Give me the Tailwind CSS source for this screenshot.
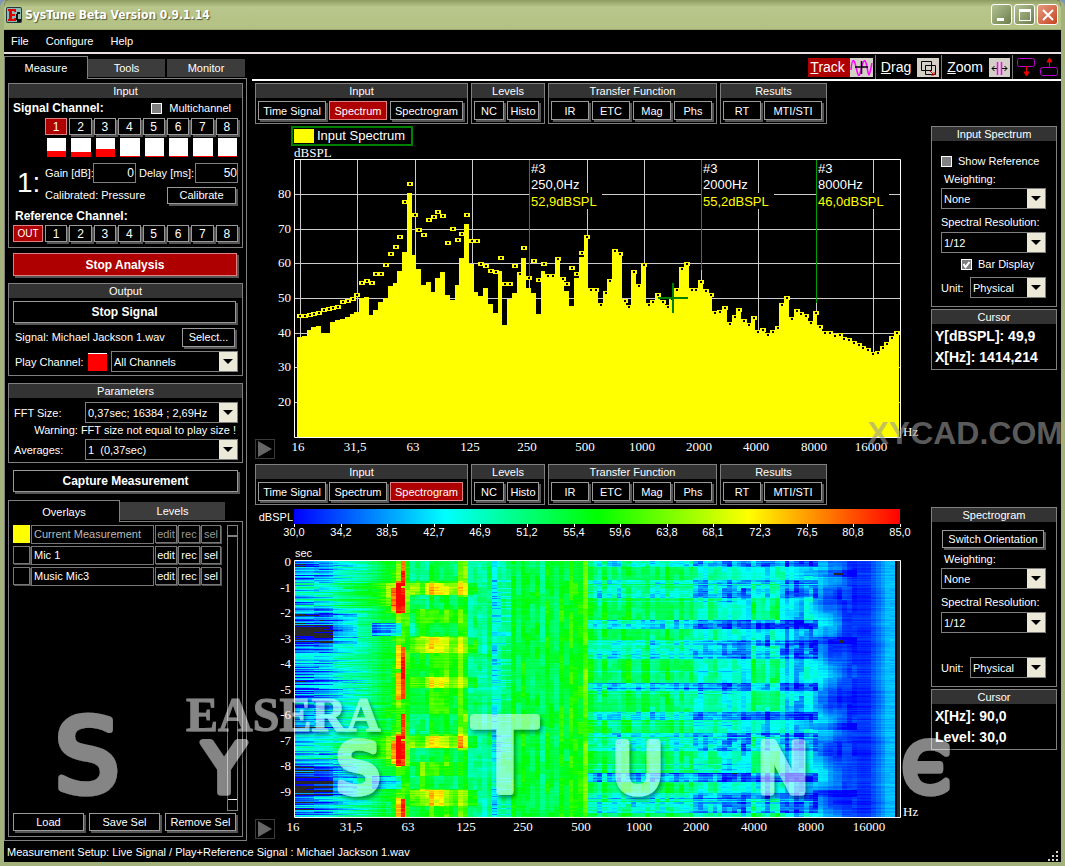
<!DOCTYPE html>
<html lang="en">
<head>
<meta charset="utf-8">
<meta name="viewport" content="width=device-width, initial-scale=1">
<title>SysTune Beta Version 0.9.1.14</title>
<script src="https://cdn.jsdelivr.net/npm/@tailwindcss/browser@4"></script>
</head>
<body class="bg-[#7d96b8] font-['Liberation_Sans',Arial,sans-serif] text-[11px] leading-[14px] text-white">
<div class="relative flex min-h-screen flex-col overflow-hidden rounded-t-lg border-x-4 border-b-4 border-[#a3b27a] bg-black">

  <header class="-mx-1 flex h-[30px] items-center border-b border-[#98a76a] bg-linear-to-b from-[#8d9c62] via-[#b9c68c] via-25% to-[#b4c184] pr-[7px] pl-[6px]">
    <svg class="mr-[3px] h-4 w-4" viewBox="0 0 16 16" aria-hidden="true"><rect width="16" height="16" rx="2" fill="#1c3a40"/><rect x="1" y="1" width="14" height="14" rx="1" fill="#8fb9b5"/><path d="M2 2h8v3H8V4H6v3h3v2H6v3h2v-1h2v3H2v-2h1V4H2z" fill="#e00000"/><path d="M11 5h3v2h-3zM10 7h2v5h3v3h-4v-2h-1z" fill="#111"/></svg>
    <h1 class="flex-1 font-['DejaVu_Sans_Condensed','DejaVu_Sans',sans-serif] text-[12px] font-bold [text-shadow:1px_1px_1px_#4a5530]">SysTune Beta Version 0.9.1.14</h1>
    <div class="flex gap-[2px]">
      <button aria-label="Minimize" class="grid h-[21px] w-[21px] place-items-center rounded-[3px] border border-white bg-linear-to-br from-[#b4c294] to-[#6d7f4c]"><svg class="h-3 w-3" viewBox="0 0 12 12"><path d="M1 9h7v3H1z" fill="#fff"/></svg></button>
      <button aria-label="Maximize" class="grid h-[21px] w-[21px] place-items-center rounded-[3px] border border-white bg-linear-to-br from-[#b4c294] to-[#6d7f4c]"><svg class="h-3 w-3" viewBox="0 0 12 12"><path d="M0 0h12v12H0zM1 3v8h10V3z" fill="#fff" fill-rule="evenodd"/></svg></button>
      <button aria-label="Close" class="grid h-[21px] w-[21px] place-items-center rounded-[3px] border border-white bg-linear-to-br from-[#e59a80] to-[#c4401a]"><svg class="h-3 w-3" viewBox="0 0 12 12"><path d="M1 1l10 10M11 1L1 11" stroke="#fff" stroke-width="2"/></svg></button>
    </div>
  </header>

  <nav class="flex h-6 items-center gap-[17px] border-b-2 border-[#e8e0e0] pl-[7px]">
    <button>File</button><button>Configure</button><button>Help</button>
  </nav>

  <div class="flex flex-1">
    <!-- Measurement controls -->
    <aside class="mt-[2px] mb-[2px] flex w-[243px] shrink-0 flex-col">
      <div class="flex items-end">
        <button class="relative z-10 -mb-px h-[23px] w-[84px] border border-b-0 border-[#808080] bg-black">Measure</button>
        <button class="mr-[2px] mb-px h-[18px] w-[77px] bg-[#3c3c3c]">Tools</button>
        <button class="mb-px h-[18px] w-[78px] bg-[#3c3c3c]">Monitor</button>
      </div>
      <div class="flex flex-1 flex-col border border-[#808080] px-[3px] pt-[4px] pb-[3px]">

        <section class="border border-[#808080]">
          <h2 class="h-[14px] bg-[#333] text-center">Input</h2>
          <div class="px-[4px]">
            <div class="flex h-5 items-center">
              <span class="flex-1 text-[12px] font-bold">Signal Channel:</span>
              <label class="flex items-center gap-[7px] pr-[7px]"><input type="checkbox" class="h-[11px] w-[11px] appearance-none border border-white bg-[#808080]">Multichannel</label>
            </div>
            <div class="ml-8 grid grid-cols-8 gap-[2px]" id="sig"></div>
            <div class="mt-[3px] ml-8 grid grid-cols-8 gap-[2px]" id="meters"></div>
            <div class="mt-[5px] flex">
              <div class="flex w-8 items-center pl-1 text-[28px] leading-7">1:</div>
              <div class="flex-1">
                <div class="flex h-[21px] items-center">
                  <label for="gain" class="w-12 whitespace-nowrap">Gain [dB]:</label>
                  <input id="gain" value="0" class="h-5 w-[43px] border border-[#808080] bg-black pr-px text-right text-[12px]">
                  <label for="delay" class="ml-[3px] w-[56px] whitespace-nowrap">Delay [ms]:</label>
                  <input id="delay" value="50" class="h-5 w-0 flex-1 border border-[#808080] bg-black text-right text-[12px]">
                </div>
                <div class="mt-[3px] flex h-[18px] items-center justify-between">
                  <span>Calibrated: Pressure</span>
                  <button class="mr-[2px] h-[17px] w-[69px] border border-[#999] shadow-[2px_2px_0_#555]">Calibrate</button>
                </div>
              </div>
            </div>
            <div class="mt-[3px] flex h-[17px] items-center pl-[2px] text-[12px] font-bold">Reference Channel:</div>
            <div class="mt-[1px] flex pb-[5px]">
              <button class="mr-[2px] h-[17px] w-[30px] border border-[#e08080] bg-[#ae0000] text-[10px]">OUT</button>
              <div class="grid flex-1 grid-cols-8 gap-[2px]" id="ref"></div>
            </div>
          </div>
        </section>

        <button class="mr-[6px] ml-[5px] mt-[5px] h-[23px] shrink-0 border border-[#e08080] bg-[#ae0000] text-[12px] font-bold shadow-[2px_2px_0_#555]">Stop Analysis</button>

        <section class="mt-[7px] border border-[#808080]">
          <h2 class="h-[14px] bg-[#333] text-center">Output</h2>
          <div class="px-[4px] pb-[3px]">
            <button class="mt-[3px] h-[22px] w-[223px] border border-[#999] text-[12px] font-bold shadow-[2px_2px_0_#555]">Stop Signal</button>
            <div class="mt-[4px] flex h-5 items-center justify-between pr-[3px] pl-[2px]"><span>Signal: Michael Jackson 1.wav</span><button class="h-[19px] w-[53px] border border-[#999] shadow-[2px_2px_0_#555]">Select...</button></div>
            <div class="mt-[4px] flex h-[21px] items-center pl-[2px]">
              <label for="play" class="w-[73px]">Play Channel:</label>
              <span class="mr-[4px] h-[18px] w-[19px] border-t border-white bg-[#f00]"></span>
              <div class="relative h-[21px] flex-1"><select id="play" class="h-full w-full appearance-none border border-[#808080] bg-black pl-[2px]"><option>All Channels</option></select><svg class="pointer-events-none absolute top-px right-px h-[19px] w-[18px] bg-[#ece9d8]" viewBox="0 0 18 19"><path d="M4 7h10l-5 5z" fill="#000"/></svg></div>
            </div>
          </div>
        </section>

        <section class="mt-[7px] border border-[#808080]">
          <h2 class="h-[14px] bg-[#333] text-center">Parameters</h2>
          <div class="px-[4px] pt-[4px] pb-[2px]">
            <div class="flex items-center pl-px"><label for="fft" class="w-[71px]">FFT Size:</label>
              <div class="relative h-[21px] flex-1"><select id="fft" class="h-full w-full appearance-none border border-[#808080] bg-black pl-[2px]"><option>0,37sec; 16384 ; 2,69Hz</option></select><svg class="pointer-events-none absolute top-px right-px h-[19px] w-[18px] bg-[#ece9d8]" viewBox="0 0 18 19"><path d="M4 7h10l-5 5z" fill="#000"/></svg></div></div>
            <p class="h-4 pr-[2px] text-right whitespace-nowrap">Warning: FFT size not equal to play size !</p>
            <div class="flex items-center pl-px"><label for="avg" class="w-[71px]">Averages:</label>
              <div class="relative h-[21px] flex-1"><select id="avg" class="h-full w-full appearance-none border border-[#808080] bg-black pl-[2px]"><option>1&nbsp; (0,37sec)</option></select><svg class="pointer-events-none absolute top-px right-px h-[19px] w-[18px] bg-[#ece9d8]" viewBox="0 0 18 19"><path d="M4 7h10l-5 5z" fill="#000"/></svg></div></div>
          </div>
        </section>

        <button class="mr-[5px] ml-[5px] mt-[7px] h-[22px] shrink-0 border border-[#999] text-[12px] font-bold shadow-[2px_2px_0_#555]">Capture Measurement</button>

        <div class="mt-[8px] flex items-end">
          <button class="relative z-10 -mb-px h-[22px] w-28 border border-b-0 border-[#808080] bg-black">Overlays</button>
          <button class="mb-px h-[18px] w-[105px] bg-[#3c3c3c]">Levels</button>
        </div>
        <section class="flex flex-1 flex-col border border-[#808080] px-[4px] pt-[3px] pb-[5px]">
          <div class="flex flex-1 justify-between">
            <ul class="flex flex-col gap-[2px]" id="overlays"></ul>
            <div class="flex w-[11px] flex-col justify-between border border-[#808080]" role="scrollbar" aria-label="Overlays" aria-controls="overlays" aria-valuenow="0"><span class="h-[11px] border-b-2 border-[#808080]"></span><span class="h-[11px] border-t border-white"></span></div>
          </div>
          <div class="mt-[2px] grid grid-cols-3 gap-[5px] pr-[2px]">
            <button class="h-[18px] border border-[#999] whitespace-nowrap shadow-[2px_2px_0_#555]">Load</button>
            <button class="h-[18px] border border-[#999] whitespace-nowrap shadow-[2px_2px_0_#555]">Save Sel</button>
            <button class="h-[18px] border border-[#999] whitespace-nowrap shadow-[2px_2px_0_#555]">Remove Sel</button>
          </div>
        </section>
      </div>
    </aside>

    <!-- Graph area -->
    <main class="ml-[5px] min-w-0 flex-1">
      <div class="flex h-[27px] items-center justify-end border-b-2 border-white pt-px pr-[2px] text-[14px]">
        <button class="flex h-[19px] items-center bg-[#ae0000] pl-[2px]"><span class="mr-[5px]"><u>T</u>rack</span><svg class="h-[19px] w-[23px] bg-[#d4d0c8]" viewBox="0 0 23 19"><path d="M1 12C2 0 4 0 6 9s3 12 5 3 4-14 6-3 2 11 5-4" fill="none" stroke="#f0f" stroke-width="1.5"/><path d="M5 9h13M11.500 3v13" stroke="#000" stroke-width="1.500"/></svg></button>
        <span class="ml-[2px] h-6 w-px bg-[#777]"></span>
        <button class="ml-[5px] flex h-[19px] items-center"><span class="mr-[6px]"><u>D</u>rag</span><svg class="h-[19px] w-[22px] bg-[#d4d0c8]" viewBox="0 0 22 19"><path d="M4.500 3.500h10v9h-10zM8.500 7.500h10v9h-10zM8.500 7.500h6v5h-6" fill="none" stroke="#000"/><path d="M13 13l4 4m0-3v3h-3" stroke="#d00" fill="none"/></svg></button>
        <span class="ml-[2px] h-6 w-px bg-[#777]"></span>
        <button class="ml-[5px] flex h-[19px] items-center"><span class="mr-[6px]"><u>Z</u>oom</span><svg class="h-[19px] w-[21px] bg-[#d4d0c8]" viewBox="0 0 21 19"><path d="M8.500 4v13M12.500 4v13" stroke="#f0f" stroke-width="1.500"/><path d="M3 10.500h5M13 10.500h5M5.500 8L3 10.500 5.500 13M15.500 8l2.500 2.500-2.500 2.500" stroke="#000" fill="none"/></svg></button>
        <span class="ml-[2px] h-6 w-px bg-[#777]"></span>
        <button aria-label="Move graph down" class="ml-[3px]"><svg class="h-5 w-5" viewBox="0 0 20 20"><rect x="1.500" y="1.500" width="17" height="8" rx="2" fill="none" stroke="#c000d0"/><path d="M10.500 9v10M8 15l2.500 4 2.500-4z" stroke="#e00" fill="#e00"/></svg></button>
        <button aria-label="Move graph up" class="ml-[3px]"><svg class="h-5 w-5" viewBox="0 0 20 20"><rect x="1.500" y="10.500" width="17" height="8" rx="2" fill="none" stroke="#c000d0"/><path d="M10.500 11V1M8 5l2.500-4L13 5z" stroke="#e00" fill="#e00"/></svg></button>
      </div>

      <section class="grid grid-cols-[1fr_126px] pr-[4px]">
        <div class="relative min-w-0 pt-[2px]">
          <div class="flex gap-[3px] pl-[3px]" data-groups="Spectrum"></div>
          <div class="mt-[2px] ml-[39px] flex h-5 w-[122px] items-center border-2 border-[#008000]"><span class="mr-[3px] ml-px h-[14px] w-5 bg-[#ff0]"></span><span class="text-[13px] whitespace-nowrap">Input Spectrum</span></div>
          <svg class="block w-full" viewBox="252 146 679 315" id="spectrum" role="img" aria-label="Input spectrum"></svg>
          <button aria-label="Play spectrum" class="absolute bottom-[2px] left-[3px] grid h-5 w-5 place-items-center border border-[#3a3a3a]"><svg class="h-4 w-4" viewBox="0 0 16 16"><path d="M1 0l14 8L1 16z" fill="#666"/></svg></button>
        </div>
        <div class="pt-[45px]">
          <div class="h-[181px] border border-[#808080]">
            <h2 class="h-[14px] bg-[#333] text-center">Input Spectrum</h2>
            <div class="px-[9px]">
              <label class="mt-[13px] flex items-center gap-[6px]"><input type="checkbox" class="h-[11px] w-[11px] appearance-none border border-white bg-[#808080]">Show Reference</label>
              <label for="w1" class="mt-[4px] block pl-[3px]">Weighting:</label>
              <div class="relative mt-[2px] h-[21px] w-[105px]"><select id="w1" class="h-full w-full appearance-none border border-[#808080] bg-black pl-[2px]"><option>None</option></select><svg class="pointer-events-none absolute top-px right-px h-[19px] w-[18px] bg-[#ece9d8]" viewBox="0 0 18 19"><path d="M4 7h10l-5 5z" fill="#000"/></svg></div>
              <label for="r1" class="mt-[6px] block whitespace-nowrap">Spectral Resolution:</label>
              <div class="relative mt-[3px] h-[21px] w-[105px]"><select id="r1" class="h-full w-full appearance-none border border-[#808080] bg-black pl-[2px]"><option>1/12</option></select><svg class="pointer-events-none absolute top-px right-px h-[19px] w-[18px] bg-[#ece9d8]" viewBox="0 0 18 19"><path d="M4 7h10l-5 5z" fill="#000"/></svg></div>
              <label class="relative mt-[4px] ml-5 flex items-center gap-[6px]"><input type="checkbox" checked class="h-[11px] w-[11px] appearance-none border border-white bg-[#808080]"><svg class="pointer-events-none absolute left-0 h-[11px] w-[11px]" viewBox="0 0 11 11"><path d="M2.500 5l2 3 4-5" stroke="#fff" stroke-width="2" fill="none"/></svg>Bar Display</label>
              <div class="mt-[6px] flex items-center"><label for="u1" class="w-[29px]">Unit:</label><div class="relative h-[21px] w-[76px]"><select id="u1" class="h-full w-full appearance-none border border-[#808080] bg-black pl-[2px]"><option>Physical</option></select><svg class="pointer-events-none absolute top-px right-px h-[19px] w-[18px] bg-[#ece9d8]" viewBox="0 0 18 19"><path d="M4 7h10l-5 5z" fill="#000"/></svg></div></div>
            </div>
          </div>
          <div class="mt-[2px] h-[61px] border border-[#808080]">
            <h2 class="h-[14px] bg-[#333] text-center">Cursor</h2>
            <div class="pt-[2px] pl-[3px] text-[14px] leading-[21px] font-bold whitespace-nowrap"><p>Y[dBSPL]: 49,9</p><p>X[Hz]: 1414,214</p></div>
          </div>
        </div>
      </section>

      <section class="grid grid-cols-[1fr_126px] pr-[4px]">
        <div class="relative min-w-0 pt-[3px]">
          <div class="flex gap-[3px] pl-[3px]" data-groups="Spectrogram"></div>
          <svg class="block w-full" viewBox="252 505 679 337" id="spectrogram" role="img" aria-label="Spectrogram"></svg>
          <button aria-label="Play spectrogram" class="absolute bottom-[3px] left-[3px] grid h-5 w-5 place-items-center border border-[#3a3a3a]"><svg class="h-4 w-4" viewBox="0 0 16 16"><path d="M1 0l14 8L1 16z" fill="#666"/></svg></button>
        </div>
        <div class="pt-[46px]">
          <div class="h-[180px] border border-[#808080]">
            <h2 class="h-[14px] bg-[#333] text-center">Spectrogram</h2>
            <div class="px-[9px]">
              <button class="mt-[8px] ml-px h-[18px] w-[102px] border border-[#999] whitespace-nowrap shadow-[2px_2px_0_#555]">Switch Orientation</button>
              <label for="w2" class="mt-[4px] block pl-[3px]">Weighting:</label>
              <div class="relative mt-[2px] h-[21px] w-[105px]"><select id="w2" class="h-full w-full appearance-none border border-[#808080] bg-black pl-[2px]"><option>None</option></select><svg class="pointer-events-none absolute top-px right-px h-[19px] w-[18px] bg-[#ece9d8]" viewBox="0 0 18 19"><path d="M4 7h10l-5 5z" fill="#000"/></svg></div>
              <label for="r2" class="mt-[6px] block whitespace-nowrap">Spectral Resolution:</label>
              <div class="relative mt-[3px] h-[21px] w-[105px]"><select id="r2" class="h-full w-full appearance-none border border-[#808080] bg-black pl-[2px]"><option>1/12</option></select><svg class="pointer-events-none absolute top-px right-px h-[19px] w-[18px] bg-[#ece9d8]" viewBox="0 0 18 19"><path d="M4 7h10l-5 5z" fill="#000"/></svg></div>
              <div class="mt-6 flex items-center"><label for="u2" class="w-[29px]">Unit:</label><div class="relative h-[21px] w-[76px]"><select id="u2" class="h-full w-full appearance-none border border-[#808080] bg-black pl-[2px]"><option>Physical</option></select><svg class="pointer-events-none absolute top-px right-px h-[19px] w-[18px] bg-[#ece9d8]" viewBox="0 0 18 19"><path d="M4 7h10l-5 5z" fill="#000"/></svg></div></div>
            </div>
          </div>
          <div class="mt-[2px] h-[61px] border border-[#808080]">
            <h2 class="h-[14px] bg-[#333] text-center">Cursor</h2>
            <div class="pt-[2px] pl-[3px] text-[14px] leading-[21px] font-bold whitespace-nowrap"><p>X[Hz]: 90,0</p><p>Level: 30,0</p></div>
          </div>
        </div>
      </section>
    </main>
  </div>

  <footer class="-mt-px flex h-5 items-center justify-between pl-[3px]"><span>Measurement Setup: Live Signal / Play+Reference Signal : Michael Jackson 1.wav</span>
    <svg class="mr-[2px] h-3 w-3 self-end" viewBox="0 0 12 12" aria-hidden="true"><path d="M9 1h2v2H9zM5 5h2v2H5zM9 5h2v2H9zM1 9h2v2H1zM5 9h2v2H5zM9 9h2v2H9z" fill="#d8d4c8"/></svg>
  </footer>

  <!-- Product name laid over the window -->
  <svg class="pointer-events-none absolute bottom-0 left-0 h-[182px] w-[1057px]" viewBox="4 680 1057 182">
    <defs><filter id="sh" x="-10%" y="-10%" width="120%" height="130%"><feDropShadow dx="2" dy="3" stdDeviation="2" flood-color="#000" flood-opacity=".8"/></filter></defs>
    <g opacity=".52" fill="#fff" filter="url(#sh)">
      <text x="186" y="731" class="font-['Liberation_Serif',serif] text-[48px] font-bold" stroke="#fff" stroke-width="1">EASERA</text>
      <g class="font-['DejaVu_Sans',sans-serif]" stroke="#fff" stroke-width="7" stroke-linejoin="round" text-anchor="middle">
        <g class="text-[102px]"><text x="87" y="792">S</text><text x="505" y="792">T</text></g>
        <g class="text-[68px]"><text x="224" y="792">Y</text><text x="358" y="792">S</text><text x="638" y="792">U</text><text x="783" y="792">N</text><text x="926" y="792">Є</text></g>
      </g>
    </g>
  </svg>
  <div class="pointer-events-none absolute top-[414px] right-[-2px] font-['Liberation_Sans',sans-serif] text-[32px] leading-[38px] font-bold text-[#999]/60">XYCAD.COM</div>
</div>

<script>
const byId = id => document.getElementById(id);

// Channel buttons and meters
const chan = (n, on) => `<button class="h-[17px] border text-[12px] ${on ? 'border-[#e08080] bg-[#ae0000]' : 'border-[#999] shadow-[2px_2px_0_#555]'}">${n}</button>`;
const nums = [1,2,3,4,5,6,7,8];
byId('sig').innerHTML = nums.map(n => chan(n, n === 1)).join('');
byId('ref').innerHTML = nums.map(n => chan(n, false)).join('');
byId('meters').innerHTML = [6,5,8,1,1,1,1,1].map(h => `<div class="mr-px ml-[2px] flex h-[19px] items-end bg-white"><span class="w-full bg-[#f00]" style="height:${h}px"></span></div>`).join('');

// Overlay list
byId('overlays').innerHTML = ['Current Measurement', 'Mic 1', 'Music Mic3'].map((n, i) => {
  const tone = i ? 'text-white' : 'text-[#999]';
  const b = (t, w) => `<button class="h-[18px] ${w} border border-[#777] ${tone} shadow-[1px_1px_0_#555]">${t}</button>`;
  return `<li class="flex h-[19px] gap-px"><button aria-label="Colour of ${n}" class="h-[18px] w-[17px] border ${i ? 'border-[#777] shadow-[1px_1px_0_#555]' : 'border-[#ff0] bg-[#ff0]'}"></button><span class="h-[19px] w-[123px] border border-[#777] pl-[2px] leading-[17px] ${i ? 'text-white' : 'text-[#bbb]'}">${n}</span>${b('edit','w-[22px]')}${b('rec','w-[22px]')}${b('sel','w-[20px]')}</li>`;
}).join('');

// Graph selection groups
const groups = [
  ['Input', 'w-[213px]', [['Time Signal','w-[68px]'],['Spectrum','w-[58px]'],['Spectrogram','w-[73px]']]],
  ['Levels', 'w-[74px]', [['NC','w-[30px]'],['Histo','w-[32px]']]],
  ['Transfer Function', 'w-[169px]', [['IR','w-[38px]'],['ETC','w-[38px]'],['Mag','w-[38px]'],['Phs','w-[38px]']]],
  ['Results', 'w-[107px]', [['RT','w-[38px]'],['MTI/STI','w-[58px]']]]
];
document.querySelectorAll('[data-groups]').forEach(el => {
  el.innerHTML = groups.map(([t, w, bs]) => `<div class="h-[41px] ${w} border border-[#808080]"><h2 class="h-[14px] bg-[#333] text-center">${t}</h2><div class="flex gap-[3px] pt-[3px] pl-[2px]">${bs.map(([n, bw]) => `<button class="h-[19px] ${bw} border whitespace-nowrap ${n === el.dataset.groups ? 'border-[#e08080] bg-[#ae0000]' : 'border-[#999] shadow-[2px_2px_0_#555]'}">${n}</button>`).join('')}</div></div>`).join('');
});

const freqs = ['16','31,5','63','125','250','500','1000','2000','4000','8000','16000'];
const serif = "font-['Liberation_Serif',serif] text-[13px]";

// Input spectrum: bar tops and peak markers in chart units
const tops = [337,336,330,327,326,333,333,322,320,319,317,314,312,298,297,315,310,302,298,286,283,271,252,193,255,269,285,282,292,278,272,295,300,285,258,224,264,292,296,288,304,313,271,325,299,293,273,258,288,293,314,271,276,276,258,279,291,306,278,257,235,288,288,303,291,279,249,252,299,305,270,284,263,303,300,293,300,305,297,288,267,262,288,288,280,289,293,311,310,306,322,315,308,319,323,316,330,328,333,330,326,303,296,317,309,312,314,321,311,325,331,331,334,333,337,338,341,343,346,348,352,351,346,342,336,331];
const peaks = [316,316,315,314,313,310,309,308,307,302,301,299,295,283,281,283,274,274,265,254,247,237,202,184,215,230,235,220,217,212,216,243,229,240,234,215,241,241,264,266,271,272,258,284,284,266,274,248,278,261,280,264,276,276,259,279,284,268,274,253,237];
const gx = k => Math.round(300 + 57.3 * k), cx = k => Math.round(300 + 4.775 * k);
let s = '';
for (let k = 0; k < 11; k++) s += `<path d="M${gx(k)}.5 160V437" stroke="#ccc"/>`;
[194,229,263,298,333,367,402].forEach((y, i) => { s += `<path d="M295 ${y}.5H900" stroke="#ccc"/><text x="291" y="${y + 4}" text-anchor="end" fill="#fff" class="${serif}">${80 - 10 * i}</text>`; });
tops.forEach((y, k) => { const x = k ? cx(k) - 3 : 297, e = Math.min(900, cx(k + 1) - 3); s += `<rect x="${x}" y="${y}" width="${e - x}" height="${437 - y}" fill="#ff0"/>`; });
tops.forEach((t, k) => { const y = k < peaks.length ? peaks[k] : t + 2, x = cx(k) - 3; s += `<rect x="${x}" y="${y - 2}" width="6" height="4" fill="#ff0"/><rect x="${x + 2}" y="${y - 1}" width="2" height="2" fill="#000"/>`; });
[[529,277,'250,0Hz','52,9dBSPL'],[701,270,'2000Hz','55,2dBSPL'],[816,303,'8000Hz','46,0dBSPL']].forEach(([x, y, f, l]) => {
  s += `<rect x="${x + 1}" y="161" width="50" height="32" fill="#000"/><rect x="${x + 1}" y="193" width="72" height="16" fill="#000"/><path d="M${x}.5 160V${y}" stroke="#00a000"/><g class="text-[13px]" fill="#fff"><text x="${x + 2}" y="173">#3</text><text x="${x + 2}" y="189">${f}</text><text x="${x + 2}" y="206" fill="#ff0">${l}</text></g>`;
});
s += '<path d="M658 298H688M673 283V313" stroke="#008000" stroke-width="2"/><path d="M294.500 437.500V159.500H900.500V437.500z" fill="none" stroke="#fff"/>';
freqs.forEach((f, k) => { s += `<text x="${gx(k) - 2}" y="451" text-anchor="middle" fill="#fff" class="${serif}">${f}</text>`; });
s += `<text x="294" y="157" fill="#fff" class="${serif}">dBSPL</text><text x="903" y="436" fill="#fff" class="${serif}">Hz</text>`;
byId('spectrum').innerHTML = s;

// Spectrogram frame, colour scale and axes
s = '<defs><linearGradient id="scale"><stop stop-color="#00f"/><stop offset=".25" stop-color="#0ff"/><stop offset=".5" stop-color="#0f0"/><stop offset=".75" stop-color="#ff0"/><stop offset="1" stop-color="#f00"/></linearGradient></defs><rect x="294" y="509" width="606" height="15" fill="url(#scale)"/><text x="293" y="521" text-anchor="end" fill="#fff" class="text-[11px]">dBSPL</text>';
['30,0','34,2','38,5','42,7','46,9','51,2','55,4','59,6','63,8','68,1','72,3','76,5','80,8','85,0'].forEach((t, i) => { const x = Math.round(294 + 46.6 * i); s += `<path d="M${x}.5 524v3" stroke="#fff"/><text x="${x}" y="536" text-anchor="middle" fill="#fff" class="text-[11px]">${t}</text>`; });
for (let i = 0; i < 10; i++) s += `<text x="291" y="${Math.round(566 + 25.5 * i)}" text-anchor="end" fill="#fff" class="${serif}">${i ? -i : 0}</text>`;
freqs.forEach((f, k) => { s += `<text x="${Math.round(293 + 57.6 * k)}" y="831" text-anchor="middle" fill="#fff" class="${serif}">${f}</text>`; });
s += `<text x="295" y="557" fill="#fff" class="text-[11px]">sec</text><text x="903" y="816" fill="#fff" class="${serif}">Hz</text><foreignObject x="295" y="561" width="605" height="256"><canvas width="605" height="256" id="heat" class="block"></canvas></foreignObject><path d="M294.500 560.500H900.500V817.500H294.500z" fill="none" stroke="#fff"/>`;
byId('spectrogram').innerHTML = s;

// Level map: a six second loop (153 rows) of a beat pattern
const rnd = (a, b) => { const v = Math.sin(a * 127.1 + b * 311.7) * 43758.5453; return v - Math.floor(v); };
const curve = [[0,38],[30,41],[45,46],[75,51],[92,57],[100,60],[112,62],[116,57],[145,58],[165,58],[170,52],[200,51],[225,54],[250,54],[278,57],[288,63],[296,54],[340,52],[380,53],[395,50],[430,47],[470,44],[490,43],[520,41],[528,38],[550,33],[570,32],[583,37],[590,40],[605,40]];
const base = x => { for (let i = 1; i < curve.length; i++) if (x <= curve[i][0]) { const [a, p] = curve[i - 1], [b, q] = curve[i]; return p + (q - p) * (x - a) / (b - a); } return 40; };
const dips = [[0,6,.7],[19,23,.9],[24,37,.6],[59,68,1.1],[79,88,.6],[88,98,.8],[122,130,1],[151,159,1],[172,176,.9],[177,190,.6],[212,221,1.1],[232,240,.6],[241,252,.8]];
const colour = v => {
  if (v < 27) return '#282828';
  const t = Math.max(0, Math.min(1, (v - 30) / 55)) * 4, i = Math.min(3, Math.floor(t)), f = Math.round((t - i) * 255);
  return [`rgb(0,${f},255)`, `rgb(0,255,${255 - f})`, `rgb(${f},255,0)`, `rgb(255,${255 - f},0)`][i];
};
const g = byId('heat').getContext('2d');
const W = 4.8, hot = (t, a, b) => t >= a && t < b;
for (let c = 0; c < 125; c++) {
  const x = c * W, x0 = Math.round(x), x1 = Math.round(x + W);
  for (let y = 0; y < 256; y++) {
    const t = y % 153;
    let v = base(x);
    const left = Math.max(0, 1 - x / 110);
    v += (rnd(y, 3) - .5) * (left * 12 + 2) + (rnd(Math.floor(c / 4), y + 9) - .5) * (left * 8 + 1.5);
    if (x < 70 && rnd(y, 21) > .8 && rnd(Math.floor(c / 5), y) > .35) v -= 9 * left;
    if (x > 90 && x < 515) v += (rnd(c, 77) - .5) * 7 + (rnd(c, Math.floor((y + c * 5) / 12) + 40) - .5) * 6;
    if (x > 515 && x < 560) v += (rnd(c, Math.floor(y / 13) + 5) - .5) * 3;
    if (hot(t, 52, 83) && x < 60) v -= hot(t, 64, 82) ? (x < 38 ? 9 + rnd(y, 8) * 8 : 5) : 4;
    if (hot(t, 62, 75) && x > 75 && x < 103) v -= 9 + rnd(y, 6) * 10;
    if (hot(t, 22, 45) && x < 110) v += 5;
    if (x > 105 && x < 110) { if (hot(t, 0, 25) || hot(t, 86, 138) || hot(y, 238, 256)) v += 19 + (rnd(1, Math.floor(y / 16)) - .5) * 6; else if (hot(t, 27, 52)) v += 13; else v -= 4; }
    if (x > 100 && x < 105 && (hot(t, 20, 53) || hot(t, 84, 108) || hot(t, 112, 139))) v += hot(t, 26, 52) ? 19 : 12;
    if (x > 95 && x < 100 && hot(t, 27, 50)) v += 13;
    if (x > 88 && x < 118 && hot(t, 22, 52)) v += 4;
    if (x > 113 && x < 178 && (hot(t, 22, 34) || hot(t, 76, 92) || hot(t, 116, 127))) v += (x > 128 && x < 146 ? 13 : 7) + (rnd(y, 30) - .5) * 4;
    if (x > 113 && x < 165 && (hot(t, 0, 20) || hot(t, 34, 48) || hot(t, 62, 75))) v -= 5;
    if (x > 124 && x < 132 && hot(t, 48, 77)) v += 7;
    if (x > 163 && x < 169) v += t < 36 ? 10 : 4;
    if (x > 177 && x < 200 && hot(t, 0, 153)) v += (rnd(Math.floor(y / 3), 12) - .6) * 4;
    if (x > 196 && x < 212) v -= 3 + (rnd(y, 12) > .8 ? 6 : 0);
    if (x > 455 && x < 482 && (t > 20 && t < 62 || t > 84 && t < 150)) v += 6;
    if (x > 508 && x < 514 && (t > 14 && t < 62 || t > 86)) v += 6;
    if (x > 292 && x < 520) {
      for (const [a, b, p] of dips) if (hot(y, a, b)) { v -= p * 9 + (rnd(c, Math.floor(y / 3)) - .4) * 5 + (rnd(y, 61) - .5) * 5; break; }
      v = Math.max(30, v);
    }
    if (x > 292 && x < 440 && rnd(y, 51) > .95) v -= 5;
    if (x > 518 && x < 590) { v += 3 * Math.sin(y / 8) * (x < 545 ? 1 : .2); v -= (Math.abs(t - 12) < 4 || Math.abs(t - 79) < 4) && x < 560 ? 4 : 0; v = Math.max(30, v); }
    g.fillStyle = colour(v);
    g.fillRect(x0, y, x1 - x0, 1);
  }
}
g.fillStyle = '#282828'; g.fillRect(602, 0, 3, 256); g.fillRect(539, 12, 9, 2); g.fillRect(544, 79, 5, 3);
</script>
</body>
</html>
